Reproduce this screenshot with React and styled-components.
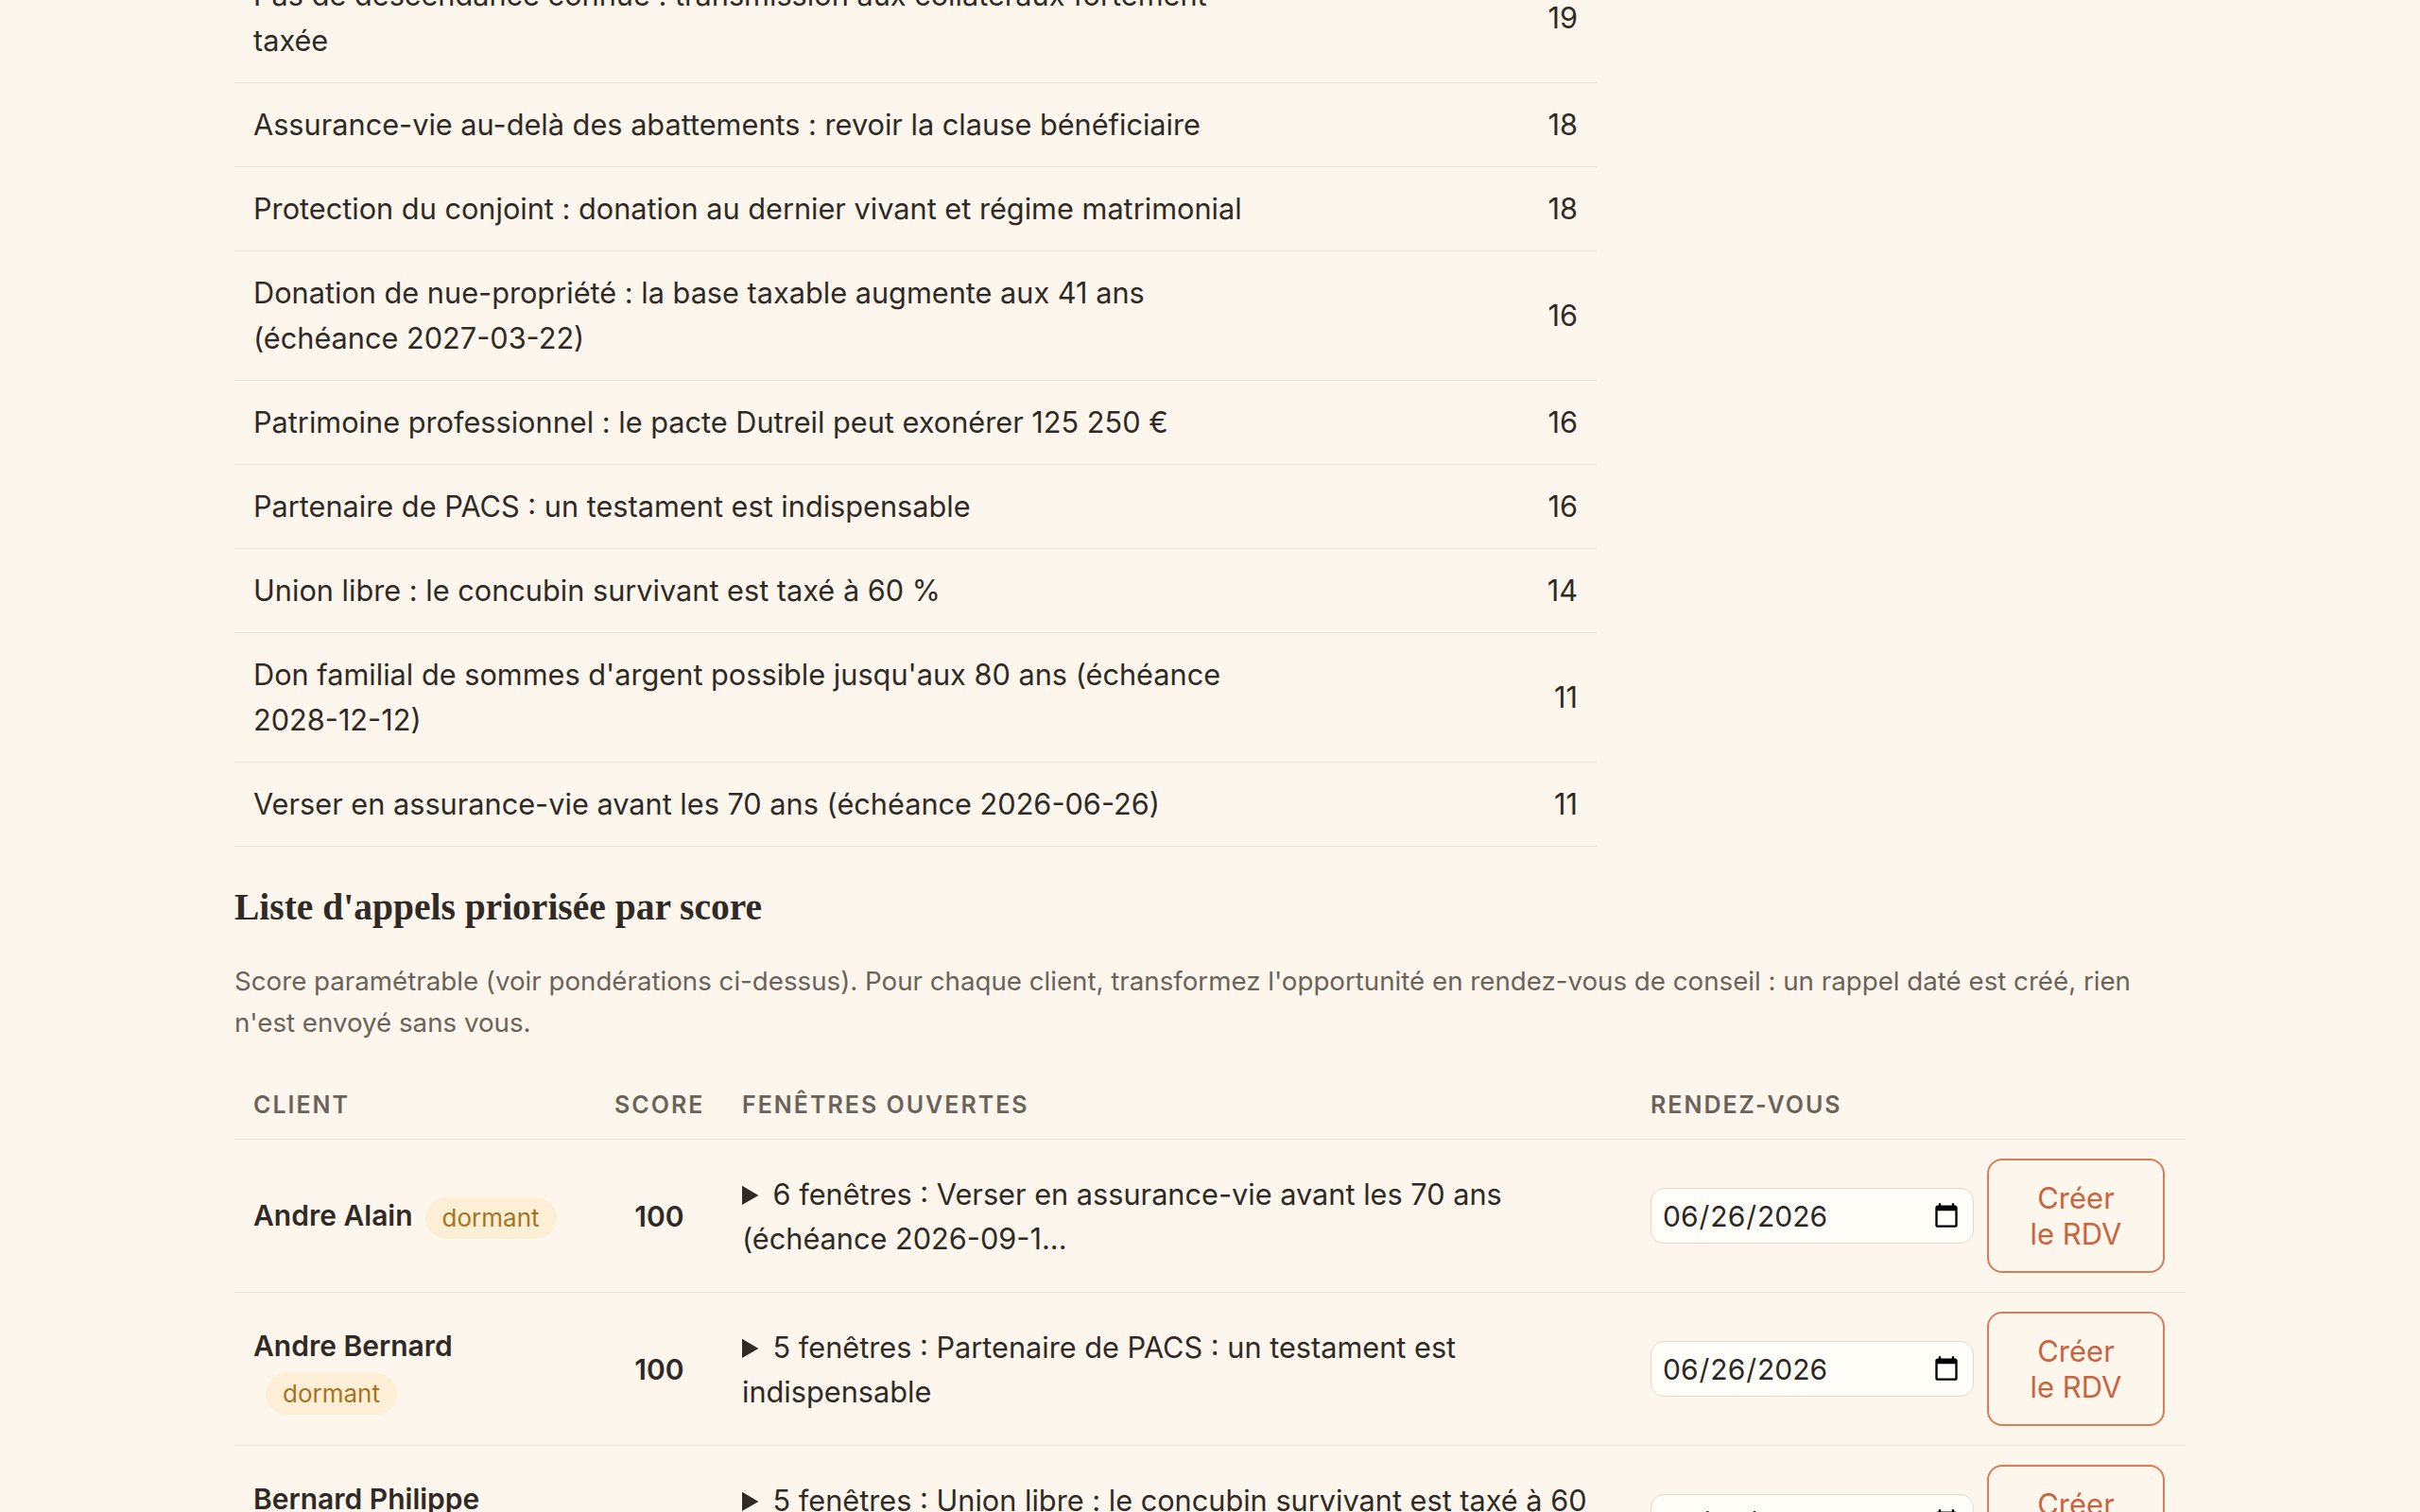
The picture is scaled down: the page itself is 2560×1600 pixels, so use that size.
import styled, { createGlobalStyle } from "styled-components";

const opportunities = [
  { label: "Pas de descendance connue : transmission aux collatéraux fortement taxée", count: 19 },
  { label: "Assurance-vie au-delà des abattements : revoir la clause bénéficiaire", count: 18 },
  { label: "Protection du conjoint : donation au dernier vivant et régime matrimonial", count: 18 },
  { label: "Donation de nue-propriété : la base taxable augmente aux 41 ans (échéance 2027-03-22)", count: 16 },
  { label: "Patrimoine professionnel : le pacte Dutreil peut exonérer 125 250 €", count: 16 },
  { label: "Partenaire de PACS : un testament est indispensable", count: 16 },
  { label: "Union libre : le concubin survivant est taxé à 60 %", count: 14 },
  { label: "Don familial de sommes d'argent possible jusqu'aux 80 ans (échéance 2028-12-12)", count: 11 },
  { label: "Verser en assurance-vie avant les 70 ans (échéance 2026-06-26)", count: 11 },
];

const calls = [
  {
    name: "Andre Alain",
    status: "dormant",
    score: 100,
    windows: "6 fenêtres : Verser en assurance-vie avant les 70 ans (échéance 2026-09-1...",
  },
  {
    name: "Andre Bernard",
    status: "dormant",
    score: 100,
    windows: "5 fenêtres : Partenaire de PACS : un testament est indispensable",
  },
  {
    name: "Bernard Philippe",
    status: "dormant",
    score: 100,
    windows: "5 fenêtres : Union libre : le concubin survivant est taxé à 60 %...",
  },
  {
    name: "Bonnet Claire",
    status: "dormant",
    score: 96,
    windows: "4 fenêtres : Protection du conjoint : donation au dernier vivant",
  },
];

export default function App() {
  return (
    <>
      <GlobalStyle />
      <Page>
        <OppTable>
          {opportunities.map((o) => (
            <OppRow key={o.label}>
              <OppLabel>{o.label}</OppLabel>
              <OppCount>{o.count}</OppCount>
            </OppRow>
          ))}
        </OppTable>

        <SectionTitle>Liste d'appels priorisée par score</SectionTitle>
        <Intro>
          Score paramétrable (voir pondérations ci-dessus). Pour chaque client,
          transformez l'opportunité en rendez-vous de conseil : un rappel daté
          est créé, rien n'est envoyé sans vous.
        </Intro>

        <CallTable>
          <HeadRow>
            <HeadCell>Client</HeadCell>
            <HeadCell $align="center">Score</HeadCell>
            <HeadCell>Fenêtres ouvertes</HeadCell>
            <HeadCell>Rendez-vous</HeadCell>
          </HeadRow>
          {calls.map((c) => (
            <CallRow key={c.name}>
              <Cell>
                <ClientName>{c.name}</ClientName>
                <Badge>{c.status}</Badge>
              </Cell>
              <ScoreCell>{c.score}</ScoreCell>
              <Cell>
                <details>
                  <Summary>{c.windows}</Summary>
                </details>
              </Cell>
              <RdvCell>
                <DateInput type="date" defaultValue="2026-06-26" />
                <RdvButton>Créer le RDV</RdvButton>
              </RdvCell>
            </CallRow>
          ))}
        </CallTable>
      </Page>
    </>
  );
}

// STYLED COMPONENTS
const GlobalStyle = createGlobalStyle`
  body {
    margin: 0;
    background: #fcf6ed;
    color: #2f2a25;
    font-family: Inter, "Liberation Sans", sans-serif;
  }
`;

const Page = styled.main`
  max-width: 2064px;
  margin: -49px auto 0;
  padding-bottom: 80px;
`;

const OppTable = styled.div`
  width: 1441px;
`;

const OppRow = styled.div`
  display: grid;
  grid-template-columns: 1100px 1fr;
  align-items: center;
  border-bottom: 1px solid #ece5d8;
  font-size: 30.7px;
  line-height: 48px;
`;

const OppLabel = styled.div`
  padding: 20px;
`;

const OppCount = styled.div`
  padding: 20px;
  text-align: right;
`;

const SectionTitle = styled.h3`
  margin: 41px 0 0;
  font-family: "Liberation Serif", "DejaVu Serif", serif;
  font-weight: 700;
  font-size: 39.5px;
  line-height: 47px;
  color: #2f2a25;
`;

const Intro = styled.p`
  margin: 33px 0 0;
  font-size: 27.7px;
  line-height: 43.5px;
  color: #6b6259;
`;

const CallTable = styled.div`
  margin-top: 29px;
`;

const HeadRow = styled.div`
  display: grid;
  grid-template-columns: 382px 135px 961px 1fr;
  border-bottom: 1px solid #e8e1d3;
`;

const HeadCell = styled.div`
  padding: 18px 20px;
  font-size: 25px;
  line-height: 36px;
  font-weight: 600;
  letter-spacing: 0.08em;
  text-transform: uppercase;
  color: #6b6259;
  text-align: ${(p) => p.$align || "left"};
`;

const CallRow = styled.div`
  display: grid;
  grid-template-columns: 382px 135px 961px 1fr;
  align-items: center;
  border-bottom: 1px solid #ece5d8;
`;

const Cell = styled.div`
  padding: 20px;
  font-size: 30.7px;
  line-height: 48px;
`;

const ClientName = styled.span`
  font-weight: 600;
  font-size: 30px;
`;

const Badge = styled.span`
  display: inline-block;
  margin-left: 13px;
  padding: 0 18px;
  height: 44px;
  line-height: 44px;
  border-radius: 22px;
  background: #fcefd5;
  color: #a8731f;
  font-size: 26px;
  vertical-align: middle;
`;

const ScoreCell = styled.div`
  padding: 20px;
  text-align: center;
  font-size: 30px;
  font-weight: 600;
`;

const Summary = styled.summary`
  cursor: pointer;
  line-height: 47px;
`;

const RdvCell = styled.div`
  display: flex;
  align-items: center;
  gap: 14px;
  padding: 20px;
`;

const DateInput = styled.input`
  box-sizing: border-box;
  width: 342px;
  height: 59px;
  padding: 0 11px;
  border: 1.5px solid #e3dbca;
  border-radius: 14px;
  background: #fffdf8;
  color: #2b2724;
  font-family: Inter, sans-serif;
  font-size: 30px;
`;

const RdvButton = styled.button`
  box-sizing: border-box;
  width: 188px;
  padding: 20.5px 38px;
  border: 2px solid #d97c5c;
  border-radius: 16px;
  background: transparent;
  color: #c9643f;
  font-family: Inter, sans-serif;
  font-size: 31px;
  line-height: 38px;
  cursor: pointer;
`;
